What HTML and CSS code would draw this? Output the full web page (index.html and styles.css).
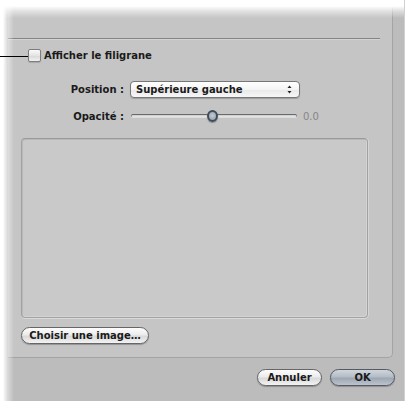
FILE: index.html
```html
<!DOCTYPE html>
<html>
<head>
<meta charset="utf-8">
<link rel="stylesheet" href="styles.css">
</head>
<body>
<div class="dialog">
  <div class="panel">
    <div class="sep"></div>
    <div class="check-row">
      <span class="callout"></span>
      <span class="checkbox"></span>
      <span class="check-label">Afficher le filigrane</span>
    </div>
    <div class="field-row pos-row">
      <span class="field-label">Position :</span>
      <div class="popup">
        <span>Supérieure gauche</span>
        <svg class="arrows" width="7" height="11" viewBox="0 0 7 11"><polygon points="1.5,4 3.5,1.5 5.5,4" fill="#222"/><polygon points="1.5,7 3.5,9.5 5.5,7" fill="#222"/></svg>
      </div>
    </div>
    <div class="field-row op-row">
      <span class="field-label">Opacité :</span>
      <div class="slider"><div class="track"></div><div class="knob"></div></div>
      <span class="value">0.0</span>
    </div>
    <div class="well"></div>
    <button class="btn choose">Choisir une image…</button>
  </div>
  <div class="footer">
    <button class="btn cancel">Annuler</button>
    <button class="btn ok">OK</button>
  </div>
  <div class="fade-top"></div>
  <div class="fade-left"></div>
</div>
</body>
</html>
```
FILE: styles.css
```css
* { box-sizing: border-box; }
html, body { margin: 0; padding: 0; background: #fff; }
body {
  font-family: "DejaVu Sans", "Liberation Sans", sans-serif;
  font-size: 10px;
  font-weight: bold;
  color: #1a1a1a;
}
.dialog {
  position: relative;
  width: 405px;
  height: 401px;
  background: #bcbcbc;
  border-right: 1px solid #d0d0d0;
  display: flex;
  flex-direction: column;
}
.panel {
  margin-left: 8px;
  width: 385px;
  height: 358px;
  background: #c5c5c5;
  border-right: 1px solid #a4a4a4;
  border-bottom: 1px solid #a4a4a4;
  border-bottom-right-radius: 5px;
  padding: 38px 0 0 13px;
  display: flex;
  flex-direction: column;
  align-items: flex-start;
}
.sep {
  align-self: stretch;
  height: 2px;
  border-top: 1px solid #858585;
  border-bottom: 1px solid #d4d4d4;
  margin: 0 12px 0 -13px;
}
.check-row {
  position: relative;
  display: flex;
  align-items: center;
  height: 13px;
  margin: 9px 0 0 7px;
  gap: 3px;
}
.callout {
  position: absolute;
  left: -28px;
  top: 7px;
  width: 28px;
  height: 1px;
  background: #000;
  z-index: 3;
}
.checkbox {
  width: 13px;
  height: 13px;
  border: 1px solid #7c7c7c;
  border-radius: 2px;
  background: linear-gradient(#fafafa, #e4e4e4 50%, #d8d8d8 55%, #f2f2f2);
  box-shadow: 0 1px 1px rgba(0,0,0,0.15);
}
.field-row {
  display: flex;
  align-items: center;
}
.field-label {
  width: 103px;
  text-align: right;
  margin-right: 6px;
}
.pos-row { margin-top: 19px; height: 17px; }
.popup {
  width: 170px;
  height: 17px;
  border: 1px solid #777;
  border-radius: 4px;
  background: linear-gradient(#ffffff, #f4f4f4 50%, #e9e9e9 55%, #f7f7f7);
  box-shadow: 0 1px 1px rgba(0,0,0,0.2);
  display: flex;
  align-items: center;
  justify-content: space-between;
  padding: 0 6px 0 5px;
}
.arrows { display: block; }
.op-row { margin-top: 11px; height: 14px; }
.slider {
  position: relative;
  width: 166px;
  height: 14px;
  margin-left: 1px;
}
.track {
  position: absolute;
  left: 0;
  right: 0;
  top: 5px;
  height: 3px;
  border-top: 1px solid #6a6a6a;
  border-left: 1px solid #888;
  border-right: 1px solid #888;
  border-radius: 2px;
  background: linear-gradient(#c8c8c8, #ececec);
  box-shadow: 0 1px 0 #dcdcdc;
}
.knob {
  position: absolute;
  left: 76px;
  top: 1px;
  width: 11px;
  height: 12px;
  border-radius: 50%;
  border: 2px solid #3f4b5a;
  background: radial-gradient(circle at 50% 45%, #c4ccd4, #8e99a6);
  box-shadow: 0 1px 1px rgba(0,0,0,0.3);
}
.value {
  margin-left: 6px;
  font-weight: normal;
  color: #858585;
  font-size: 10px;
}
.well {
  margin-top: 15px;
  width: 347px;
  height: 180px;
  border: 1px solid #a2a2a2;
  border-top-color: #9a9a9a;
  border-radius: 4px;
  background: #c9c9c9;
  box-shadow: 0 1px 0 #dadada, 1px 0 0 #d6d6d6, inset 1px 1px 0 #b8b8b8, inset -1px -1px 0 #d4d4d4;
}
.btn {
  height: 17px;
  padding: 0;
  border: 1px solid #666;
  border-radius: 9px;
  background: linear-gradient(#fdfdfd, #ececec 45%, #d9d9d9 55%, #f3f3f3);
  box-shadow: 0 1px 1px rgba(0,0,0,0.25);
  font-family: "DejaVu Sans", "Liberation Sans", sans-serif;
  font-size: 10px;
  font-weight: bold;
  color: #1a1a1a;
}
.choose { margin-top: 9px; width: 128px; }
.footer {
  display: flex;
  justify-content: flex-end;
  gap: 8px;
  padding: 11px 9px 0 0;
}
.cancel, .ok { width: 65px; }
.ok {
  border-color: #555a61;
  background: linear-gradient(#d0d6dd, #b4bcc6 45%, #9ea7b2 55%, #bcc4ce);
}
.fade-top {
  position: absolute;
  left: 0;
  right: 0;
  top: 0;
  height: 18px;
  background: linear-gradient(#fff 0, #fff 6px, rgba(255,255,255,0.5) 11px, rgba(255,255,255,0) 18px);
  z-index: 2;
}
.fade-left {
  position: absolute;
  left: 0;
  top: 0;
  bottom: 0;
  width: 14px;
  background: linear-gradient(to right, #fff 0, #fff 3px, rgba(255,255,255,0.5) 7px, rgba(255,255,255,0) 14px);
  z-index: 2;
}
```
